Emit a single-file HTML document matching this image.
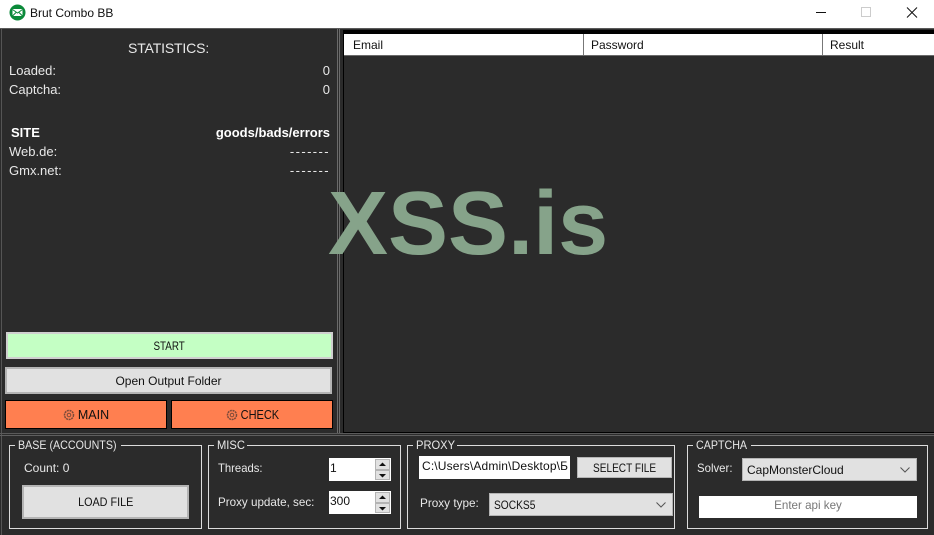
<!DOCTYPE html>
<html><head><meta charset="utf-8"><style>
html,body{margin:0;padding:0;width:934px;height:535px;overflow:hidden;background:#2b2b2b}
body{position:relative;font-family:"Liberation Sans",sans-serif;font-size:12px;color:#000}
.a,.t,.b,.g,.i{position:absolute;box-sizing:border-box}
.t{white-space:nowrap;line-height:16px;color:#e8e8e8}
.l{font-size:13px}
.b{display:flex;align-items:center;justify-content:center;background:#e1e1e1;border:1px solid #b4b4b4;color:#111;white-space:nowrap}
.g{border:1px solid #dcdcdc}
.g>span{position:absolute;top:-8px;left:5px;background:#2b2b2b;padding:0 3px;line-height:14px;color:#e8e8e8;white-space:nowrap}
.n{display:inline-block;transform-origin:0 50%}
.c{display:inline-block;transform-origin:50% 50%}
.i{background:#fff;color:#111;white-space:nowrap;overflow:hidden;line-height:20px}
.cb{display:flex;align-items:center;padding-left:4px;justify-content:flex-start}
.cb svg{position:absolute;right:6px;top:8px}
.s{position:absolute;background:#e1e1e1;border:1px solid #b4b4b4;box-sizing:border-box}
</style></head><body>
<div class="a" style="left:0;top:0;width:934px;height:28px;background:#fff"></div>
<svg class="a" style="left:9px;top:4px" width="17" height="17" viewBox="0 0 17 17"><circle cx="8.5" cy="8.5" r="8" fill="#0b8a3a"/><rect x="3.5" y="5" width="10" height="7" fill="#fff"/><path d="M3.5 5.5L8.5 9L13.5 5.5M3.5 12L7 8.5M13.5 12L10 8.5" stroke="#0b8a3a" fill="none"/></svg>
<div class="t" style="left:30px;top:5px;color:#111">Brut Combo BB</div>
<svg class="a" style="left:810px;top:6px" width="115" height="14" viewBox="0 0 115 14"><path d="M6 6.5H16" stroke="#111"/><rect x="51.5" y="1.5" width="9" height="9" fill="none" stroke="#ccc"/><path d="M97 1.5L107 11.5M107 1.5L97 11.5" stroke="#111"/></svg>

<div class="a" style="left:0;top:28px;width:934px;height:1px;background:#5a5a5a"></div>
<div class="a" style="left:1px;top:29px;width:1px;height:506px;background:#555"></div>
<div class="a" style="left:337px;top:29px;width:1px;height:404px;background:#6a6a6a"></div>
<div class="a" style="left:339px;top:29px;width:1px;height:404px;background:#6a6a6a"></div>
<div class="a" style="left:343px;top:30px;width:1px;height:403px;background:#000"></div>
<div class="a" style="left:343px;top:30px;width:591px;height:4px;background:#000"></div>
<div class="a" style="left:343px;top:432px;width:591px;height:1px;background:#000"></div>
<div class="a" style="left:0;top:433px;width:934px;height:1px;background:#5a5a5a"></div>
<div class="a" style="left:0;top:435px;width:934px;height:1px;background:#5f5f5f"></div>

<div class="t" style="left:128px;top:40px;font-size:14px;letter-spacing:-.15px">STATISTICS:</div>
<div class="t l" style="left:9px;top:63px">Loaded:</div>
<div class="t l" style="right:604px;top:63px">0</div>
<div class="t l" style="left:9px;top:82px">Captcha:</div>
<div class="t l" style="right:604px;top:82px">0</div>
<div class="t l" style="left:11px;top:125px;font-weight:bold;color:#fff">SITE</div>
<div class="t l" style="right:604px;top:125px;font-weight:bold;color:#fff">goods/bads/errors</div>
<div class="t l" style="left:9px;top:144px">Web.de:</div>
<div class="t l" style="right:604px;top:144px;letter-spacing:1.4px">-------</div>
<div class="t l" style="left:9px;top:163px">Gmx.net:</div>
<div class="t l" style="right:604px;top:163px;letter-spacing:1.4px">-------</div>

<div class="b" style="left:6px;top:332px;width:327px;height:27px;background:#c4ffc4;border:2px solid #cfcfcf"><span class="c" style="transform:scaleX(.82)">START</span></div>
<div class="b" style="left:5px;top:367px;width:327px;height:27px;border:2px solid #b4b4b4">Open Output Folder</div>
<div class="b" style="left:5px;top:400px;width:162px;height:29px;background:#ff7f50;border-color:#000;font-size:12.5px"><svg width="12" height="12" viewBox="0 0 12 12" style="margin-right:3px"><circle cx="6" cy="6" r="4.5" fill="none" stroke="#7a4a3a" stroke-width="1.5" stroke-dasharray="2 .7"/><circle cx="6" cy="6" r="1.8" fill="none" stroke="#7a4a3a"/></svg>MAIN</div>
<div class="b" style="left:171px;top:400px;width:162px;height:29px;background:#ff7f50;border-color:#000;font-size:12.5px"><svg width="12" height="12" viewBox="0 0 12 12" style="margin-right:3px"><circle cx="6" cy="6" r="4.5" fill="none" stroke="#7a4a3a" stroke-width="1.5" stroke-dasharray="2 .7"/><circle cx="6" cy="6" r="1.8" fill="none" stroke="#7a4a3a"/></svg><span class="c" style="transform:scaleX(.88);margin:0 -3px">CHECK</span></div>

<div class="a" style="left:344px;top:34px;width:590px;height:22px;background:#fff;border-bottom:1px solid #6a6a6a"></div>
<div class="a" style="left:583px;top:34px;width:1px;height:21px;background:#777"></div>
<div class="a" style="left:822px;top:34px;width:1px;height:21px;background:#777"></div>
<div class="t" style="left:353px;top:37px;color:#111">Email</div>
<div class="t" style="left:591px;top:37px;color:#111">Password</div>
<div class="t" style="left:830px;top:37px;color:#111">Result</div>

<div class="g" style="left:9px;top:445px;width:193px;height:84px"><span><span class="n" style="transform:scaleX(.89);width:100px">BASE (ACCOUNTS)</span></span></div>
<div class="t" style="left:24px;top:460px">Count: 0</div>
<div class="b" style="left:22px;top:485px;width:167px;height:34px;border:2px solid #b4b4b4"><span class="c" style="transform:scaleX(.9)">LOAD FILE</span></div>

<div class="g" style="left:208px;top:445px;width:193px;height:84px"><span><span class="n" style="transform:scaleX(.93);width:27px">MISC</span></span></div>
<div class="t" style="left:218px;top:460px"><span class="n" style="transform:scaleX(.94)">Threads:</span></div>
<div class="t" style="left:218px;top:494px"><span class="n" style="transform:scaleX(.97)">Proxy update, sec:</span></div>
<div class="i" style="left:329px;top:458px;width:62px;height:23px;padding-left:1px">1</div>
<div class="i" style="left:329px;top:491px;width:62px;height:23px;padding-left:1px">300</div>
<div class="s" style="left:375px;top:459px;width:15px;height:11px"></div><div class="s" style="left:375px;top:470px;width:15px;height:10px"></div>
<div class="s" style="left:375px;top:492px;width:15px;height:11px"></div><div class="s" style="left:375px;top:503px;width:15px;height:10px"></div>
<svg class="a" style="left:375px;top:459px" width="15" height="55" viewBox="0 0 15 55"><path d="M4 7L7.5 3.5L11 7ZM4 15L7.5 18.5L11 15ZM4 40L7.5 36.5L11 40ZM4 48L7.5 51.5L11 48Z" fill="#111"/></svg>

<div class="g" style="left:407px;top:445px;width:268px;height:84px"><span><span class="n" style="transform:scaleX(.93);width:38px">PROXY</span></span></div>
<div class="i" style="left:419px;top:456px;width:151px;height:23px;padding-left:3px;letter-spacing:.15px">C:\Users\Admin\Desktop\Б</div>
<div class="b" style="left:577px;top:457px;width:95px;height:21px"><span class="c" style="transform:scaleX(.84)">SELECT FILE</span></div>
<div class="t" style="left:420px;top:495px"><span class="n" style="transform:scaleX(.98)">Proxy type:</span></div>
<div class="b cb" style="left:489px;top:493px;width:184px;height:23px"><span class="n" style="transform:scaleX(.85)">SOCKS5</span><svg width="10" height="6" viewBox="0 0 10 6"><path d="M.5 .5L5 5L9.5 .5" fill="none" stroke="#555"/></svg></div>

<div class="g" style="left:687px;top:445px;width:241px;height:84px"><span><span class="n" style="transform:scaleX(.89);width:52px">CAPTCHA</span></span></div>
<div class="t" style="left:697px;top:460px"><span class="n" style="transform:scaleX(.95)">Solver:</span></div>
<div class="b cb" style="left:742px;top:458px;width:175px;height:23px">CapMonsterCloud<svg width="10" height="6" viewBox="0 0 10 6"><path d="M.5 .5L5 5L9.5 .5" fill="none" stroke="#555"/></svg></div>
<div class="i" style="left:699px;top:496px;width:218px;height:22px;text-align:center;color:#777;font-size:11.6px">Enter api key</div>

<div class="t" style="left:328px;top:174px;font-size:90px;line-height:100px;font-weight:bold;color:#86a38a">XSS.is</div>
</body></html>
